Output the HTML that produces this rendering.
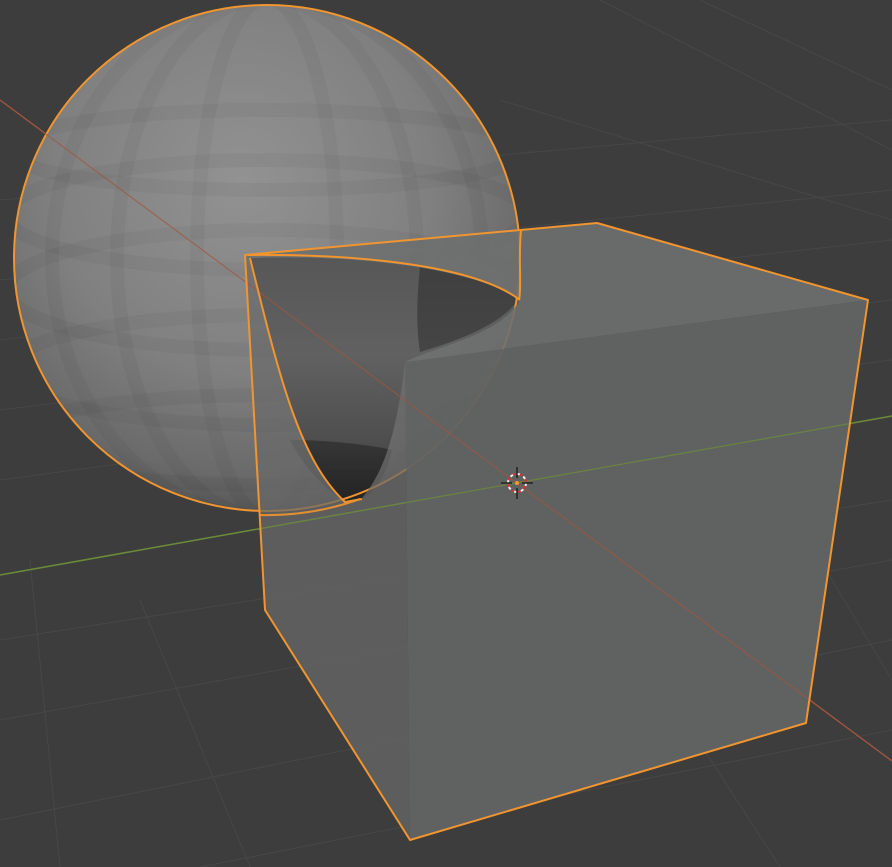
<!DOCTYPE html>
<html><head><style>html,body{margin:0;padding:0;background:#3d3d3d;overflow:hidden}svg{display:block}</style></head>
<body>
<svg width="892" height="867" viewBox="0 0 892 867" xmlns="http://www.w3.org/2000/svg">
<defs>
<radialGradient id="sg" cx="0.45" cy="0.35" r="0.68">
<stop offset="0" stop-color="#929292"/><stop offset="0.55" stop-color="#808080"/><stop offset="0.85" stop-color="#6a6a6a"/><stop offset="1" stop-color="#505050"/>
</radialGradient>
<linearGradient id="cav" x1="0" y1="0" x2="0" y2="1">
<stop offset="0" stop-color="#575757"/><stop offset="0.4" stop-color="#616161"/><stop offset="0.75" stop-color="#4e4e4e"/><stop offset="1" stop-color="#333"/>
</linearGradient>
<clipPath id="sc"><circle cx="267" cy="258" r="253"/></clipPath>
</defs>
<rect width="892" height="867" fill="#3d3d3d"/>
<g stroke="#474747" stroke-width="1" fill="none">
<line x1="0" y1="720" x2="892" y2="560"/><line x1="0" y1="640" x2="892" y2="500"/>
<line x1="0" y1="480" x2="892" y2="360"/><line x1="0" y1="410" x2="892" y2="300"/>
<line x1="0" y1="340" x2="892" y2="240"/><line x1="0" y1="280" x2="892" y2="190"/>
<line x1="0" y1="820" x2="892" y2="640"/><line x1="200" y1="867" x2="892" y2="730"/>
<line x1="140" y1="600" x2="250" y2="867"/><line x1="30" y1="560" x2="60" y2="867"/>
<line x1="600" y1="0" x2="892" y2="150"/><line x1="700" y1="0" x2="892" y2="90"/>
<line x1="500" y1="100" x2="892" y2="220"/><line x1="0" y1="200" x2="892" y2="120"/>
<line x1="620" y1="620" x2="780" y2="867"/><line x1="820" y1="560" x2="892" y2="680"/>
</g>
<line x1="0" y1="575" x2="892" y2="416" stroke="#6a8a3a" stroke-width="1.5"/>
<line x1="0" y1="100" x2="892" y2="761" stroke="#a0553f" stroke-width="1.3"/>
<!-- sphere -->
<circle cx="267" cy="258" r="253" fill="url(#sg)"/>
<g clip-path="url(#sc)" stroke="rgba(0,0,0,0.035)" stroke-width="14" fill="none">
<ellipse cx="267" cy="150" rx="260" ry="40"/><ellipse cx="267" cy="215" rx="260" ry="55"/>
<ellipse cx="267" cy="290" rx="260" ry="60"/><ellipse cx="267" cy="370" rx="260" ry="55"/>
<ellipse cx="267" cy="440" rx="260" ry="45"/>
<ellipse cx="267" cy="258" rx="70" ry="260"/><ellipse cx="267" cy="258" rx="150" ry="260"/><ellipse cx="267" cy="258" rx="215" ry="260"/>
</g>
<!-- cavity -->
<path d="M250,258 C340,254 470,265 520,300 C500,335 440,345 405,362 C398,420 388,470 360,500 L345,502 C300,460 280,380 250,258 Z" fill="url(#cav)"/>
<path d="M420,265 C470,272 505,285 518,300 C500,325 460,340 420,352 C415,320 418,290 420,265Z" fill="rgba(0,0,0,0.28)"/>
<path d="M290,440 C330,440 370,445 392,450 C385,480 372,495 360,500 L345,502 C320,485 303,465 290,440Z" fill="rgba(0,0,0,0.3)"/>
<circle cx="267" cy="258" r="253" fill="none" stroke="#f0952f" stroke-width="2"/>
<!-- cube faces translucent -->
<polygon points="405,362 868,300 806,723 410,840" fill="rgba(98,99,99,0.96)"/>
<path d="M245,255 L597,223 L868,300 L405,362 C440,345 500,335 520,300 C470,265 340,254 250,258 Z" fill="rgba(110,111,111,0.9)"/>
<path d="M245,255 L250,258 C280,380 300,460 345,502 L360,500 C388,470 398,420 405,362 L410,840 L265,610 Z" fill="rgba(105,106,106,0.72)"/>
<line x1="0" y1="100" x2="892" y2="761" stroke="#a0553f" stroke-width="1.2" opacity="0.7"/>
<line x1="0" y1="575" x2="892" y2="416" stroke="#6a8a3a" stroke-width="1.3" opacity="0.8"/>
<!-- outlines -->
<g fill="none" stroke="#f0952f" stroke-width="2" stroke-linejoin="round">
<path d="M245,255 L597,223 L868,300 L806,723 L410,840 L265,610 L245,255 Z"/>
<path d="M248,255 C340,254 470,262 520,300"/>
<path d="M250,258 C280,380 300,460 345,502 L362,499"/>
<path d="M521,230 C518,260 522,285 519,300"/>
<path d="M260,515 C300,516 335,508 360,499" opacity="0.9"/>
</g>
<!-- cursor -->
<g transform="translate(517,483)">
<circle r="9" fill="none" stroke="#eee" stroke-width="2" stroke-dasharray="4 3"/>
<circle r="9" fill="none" stroke="#c33" stroke-width="2" stroke-dasharray="3 4" stroke-dashoffset="4"/>
<line x1="-16" y1="0" x2="-5" y2="0" stroke="#222" stroke-width="1.5"/><line x1="5" y1="0" x2="16" y2="0" stroke="#222" stroke-width="1.5"/>
<line x1="0" y1="-16" x2="0" y2="-5" stroke="#222" stroke-width="1.5"/><line x1="0" y1="5" x2="0" y2="16" stroke="#222" stroke-width="1.5"/>
<circle r="2" fill="#f0952f"/>
</g>
</svg>
</body></html>
